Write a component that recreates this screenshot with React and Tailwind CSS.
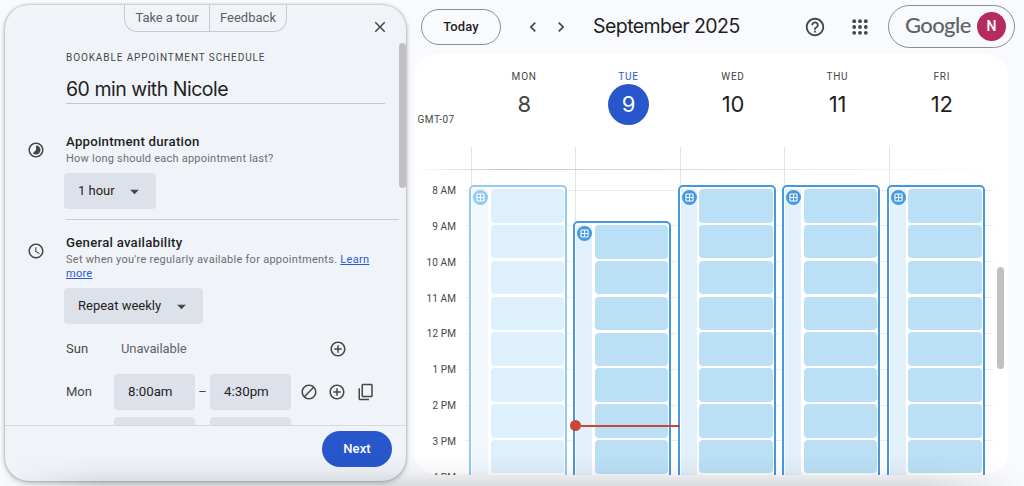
import React from "react";
import {
  MdAddCircleOutline,
  MdArrowDropDown,
  MdBlock,
  MdChevronLeft,
  MdChevronRight,
  MdClose,
  MdContentCopy,
  MdHelpOutline,
  MdSchedule,
  MdTimelapse,
} from "react-icons/md";

const days = [
  { name: "MON", date: 8, past: true, slots: 9 },
  { name: "TUE", date: 9, today: true, late: true, slots: 8 },
  { name: "WED", date: 10, slots: 9 },
  { name: "THU", date: 11, slots: 9 },
  { name: "FRI", date: 12, slots: 9 },
];

const hours = ["8 AM", "9 AM", "10 AM", "11 AM", "12 PM", "1 PM", "2 PM", "3 PM", "4 PM"];

const GridIcon = () => (
  <svg viewBox="0 0 14 14" className="w-full h-full" fill="none" stroke="white" strokeWidth="1">
    <rect x="3.7" y="3.7" width="6.6" height="6.6" rx="0.8" />
    <path d="M7 3.7v6.6M3.7 7h6.6" />
  </svg>
);

const AppsIcon = () => (
  <svg viewBox="0 0 16 16" className="w-4 h-4" fill="#444746">
    {[2.2, 8, 13.8].map((y) => [2.2, 8, 13.8].map((x) => <circle key={`${x}-${y}`} cx={x} cy={y} r="1.9" />))}
  </svg>
);

const Select = ({ label, className }) => (
  <button className={`h-9 -ml-0.5 rounded-[4px] bg-[#dde1e9] flex items-center justify-between pl-[14px] pr-[11px] text-[13px] text-[#1f1f1f] ${className}`}>
    {label}
    <MdArrowDropDown size={21} className="text-[#444746]" />
  </button>
);

const TimeInput = ({ value }) => (
  <div className="w-[81px] h-9 rounded-[4px] bg-[#dde1e9] flex items-center pl-[14px] text-[13.3px] text-[#1f1f1f]">{value}</div>
);

const HourLines = () => (
  <>
    <div className="h-[19.5px]" />
    {hours.map((hour) => (
      <div key={hour} className="h-[35.85px] border-t border-[#ebebeb]" />
    ))}
  </>
);

const SchedulePanel = () => (
  <aside className="w-[401px] h-[476px] mt-[5px] ml-[5px] shrink-0 rounded-[24px] bg-[#f0f4f9] overflow-hidden flex flex-col shadow-[0_0_2px_1px_rgba(60,64,67,0.22),0_2px_5px_1px_rgba(60,64,67,0.2)]">
    <div className="h-[420px] overflow-hidden flex">
      <div className="w-[394px]">
        <div className="h-[27px] flex items-start">
          <div className="ml-[119px] w-[163px] h-[27px] flex border border-t-0 border-[#c7cacf] rounded-b-[13px] text-[13px] text-[#5c5f62]">
            <div className="w-[85px] flex items-center justify-center border-r border-[#c7cacf] tracking-[-0.1px]">Take a tour</div>
            <div className="flex-1 flex items-center justify-center">Feedback</div>
          </div>
          <button className="mt-[13px] ml-[84px]">
            <MdClose size={18} className="text-[#444746]" />
          </button>
        </div>
        <div className="pl-[61px]">
          <div className="mt-[18px] h-4 leading-4 text-[10px] tracking-[0.9px] text-[#444746]">BOOKABLE APPOINTMENT SCHEDULE</div>
          <div className="mt-2 w-[319px] h-[30px] pt-px leading-[28px] border-b border-[#c4c7cc] font-[Inter,sans-serif] text-[19.5px] tracking-[-0.5px] text-[#1f1f1f]">60 min with Nicole</div>

          <section className="relative mt-[29px]">
            <MdTimelapse size={18} className="absolute -left-[39.5px] top-[7.5px] text-[#444746]" />
            <h2 className="leading-[18px] text-[13.2px] font-medium tracking-[0.25px] text-[#1f1f1f]">Appointment duration</h2>
            <p className="leading-[14px] pt-px text-[11px] tracking-[0.22px] text-[#6b6e72]">How long should each appointment last?</p>
            <Select label="1 hour" className="w-[92px] mt-[7px]" />
          </section>

          <div className="mt-[10px] h-px bg-[#c9ccd1]" />

          <section className="relative mt-[14px]">
            <MdSchedule size={18} className="absolute -left-[39.5px] top-[7.5px] text-[#444746]" />
            <h2 className="leading-[18px] text-[13.2px] font-medium tracking-[0.25px] text-[#1f1f1f]">General availability</h2>
            <p className="w-[320px] leading-[14px] pt-px text-[11px] tracking-[0.27px] text-[#6b6e72]">
              Set when you're regularly available for appointments. <a className="text-[#2a5bd7] underline">Learn<br />more</a>
            </p>
            <Select label="Repeat weekly" className="w-[139px] mt-[7px]" />
          </section>

          <div className="mt-[7px] flex flex-col gap-[7px] text-[13px] text-[#444746]">
            <div className="h-9 flex items-center">
              <span className="w-[55px]">Sun</span>
              <span className="w-[207.5px] tracking-[-0.1px] text-[#5f6368]">Unavailable</span>
              <MdAddCircleOutline size={18} />
            </div>
            <div className="h-9 flex items-center">
              <span className="w-[48px]">Mon</span>
              <TimeInput value="8:00am" />
              <span className="w-[15px] text-center">–</span>
              <TimeInput value="4:30pm" />
              <div className="ml-[8.5px] flex gap-[10.5px]">
                <MdBlock size={18} />
                <MdAddCircleOutline size={18} />
                <MdContentCopy size={18} className="-scale-y-100" />
              </div>
            </div>
            <div className="h-9 flex pl-12 gap-[15px]">
              <TimeInput />
              <TimeInput />
            </div>
          </div>
        </div>
      </div>
      <div className="mt-[38px] w-[7px] h-[145px] rounded-full bg-[#c1c1c1]" />
    </div>
    <div className="flex-1 border-t border-[#d5d8dd] flex justify-end items-start pt-[5px] pr-[14px]">
      <button className="w-[70px] h-9 rounded-full bg-[#2757cb] text-white text-[13px] font-medium tracking-[0.1px]">Next</button>
    </div>
  </aside>
);

const TopBar = () => (
  <header className="h-[53px] flex items-center pl-[7px] pr-[9px]">
    <button className="w-[80px] h-9 rounded-full border border-[#8a8d90] text-[13px] font-medium text-[#1f1f1f] tracking-[0.1px]">Today</button>
    <MdChevronLeft size={20} className="ml-[22px] text-[#444746]" />
    <MdChevronRight size={20} className="ml-[8px] text-[#444746]" />
    <h1 className="ml-[22px] w-[211px] font-[Inter,sans-serif] text-[19.5px] tracking-[-0.56px] text-[#1f1f1f]">September 2025</h1>
    <MdHelpOutline size={22} className="text-[#444746]" />
    <div className="ml-[25.5px]">
      <AppsIcon />
    </div>
    <div className="ml-auto w-[127px] h-[43px] rounded-full border border-[#8a8d90] flex items-center justify-between pl-4 pr-2">
      <span className="pb-[3px] font-[Lato,sans-serif] text-[22px] font-medium leading-none tracking-[-0.6px] text-[#5f6368]">Google</span>
      <div className="w-[29px] h-[29px] rounded-full bg-[#b42c5d] text-white text-[14px] font-medium flex items-center justify-center">N</div>
    </div>
  </header>
);

const DayHeading = ({ day }) => (
  <div className="flex flex-col items-center">
    <div className={`mt-4 ml-[2px] leading-[14px] text-[10px] tracking-[0.8px] ${day.today ? "text-[#2757cb]" : "text-[#444746]"}`}>{day.name}</div>
    <div className={`ml-[2px] w-[41px] h-[41px] rounded-full flex items-center justify-center font-[Inter,sans-serif] text-[22px] tracking-[-0.2px] ${day.today ? "bg-[#2757cb] text-white" : day.past ? "text-[#444746]" : "text-[#1f1f1f]"}`}>
      {day.date}
    </div>
    <div className="mt-auto h-[22px] w-full border-l border-[#e2e3e3]" />
  </div>
);

const Bookings = ({ day }) => (
  <div
    className={`absolute -left-[3px] -bottom-10 w-[98px] rounded-[5px] border-2 bg-white flex pl-px pt-[2px] ${day.late ? "top-[51px]" : "top-[15px]"} ${day.past ? "border-[#90cbf1]" : "border-[#4799df]"}`}
  >
    <div className={`w-[16px] h-full ${day.past ? "bg-[#f0f8fd]" : "bg-[#e3f1fc]"}`}>
      <div className={`relative left-px top-px w-[15px] h-[15px] rounded-full ${day.past ? "bg-[#90cbf1]" : "bg-[#4799df]"}`}>
        <GridIcon />
      </div>
    </div>
    <div className="ml-[2.5px] w-[73.5px] flex flex-col gap-[2.35px]">
      {Array.from({ length: day.slots }, (_, i) => (
        <div key={i} className={`h-[33.5px] shrink-0 rounded-[4px] ${day.past ? "bg-[#def0fc]" : "bg-[#bbe0f6]"}`} />
      ))}
    </div>
  </div>
);

const Calendar = () => (
  <div className="mt-px w-[594px] h-[421px] rounded-[24px] bg-white overflow-hidden">
    <div className="h-[115px] flex">
      <div className="w-[57px] pt-[58px] pl-[3.5px] leading-[15px] text-[10px] tracking-[0.5px] text-[#444746]">GMT-07</div>
      <div className="w-[522px] grid grid-cols-5">
        {days.map((day) => (
          <DayHeading key={day.name} day={day} />
        ))}
      </div>
    </div>
    <div className="h-px bg-linear-to-r from-transparent via-[#c8c8c8] via-15% to-transparent" />
    <div className="h-[305px] flex overflow-hidden">
      <div className="w-[51px] pt-[3px] pr-[9px] text-right text-[10px] tracking-[0.1px] text-[#444746]">
        {hours.map((hour) => (
          <div key={hour} className="h-[35.85px] leading-[36px]">{hour}</div>
        ))}
      </div>
      <div className="w-[6px]">
        <HourLines />
      </div>
      <div className="w-[522px] grid grid-cols-5">
        {days.map((day) => (
          <div key={day.name} className="relative border-l border-[#e2e3e3]">
            <HourLines />
            <Bookings day={day} />
            {day.today && (
              <div className="absolute z-10 -left-[6px] top-[250px] w-[110px] flex items-center">
                <div className="w-[11px] h-[11px] rounded-full bg-[#cd4533]" />
                <div className="flex-1 h-[2px] bg-[#cd4533]" />
              </div>
            )}
          </div>
        ))}
      </div>
      <div className="ml-[4px] mt-[97px] w-[7px] h-[102px] shrink-0 rounded-full bg-[#c1c1c1]" />
    </div>
  </div>
);

const App = () => (
  <div className="relative w-[1024px] h-[486px] overflow-hidden bg-[#f8fafd] font-[Roboto,sans-serif] flex gap-2">
    <SchedulePanel />
    <main className="flex-1">
      <TopBar />
      <Calendar />
    </main>
    <div className="absolute inset-x-0 bottom-0 h-8 pointer-events-none bg-linear-to-b from-transparent via-black/3 to-black/12 mask-x-from-90%" />
  </div>
);

export default App;
